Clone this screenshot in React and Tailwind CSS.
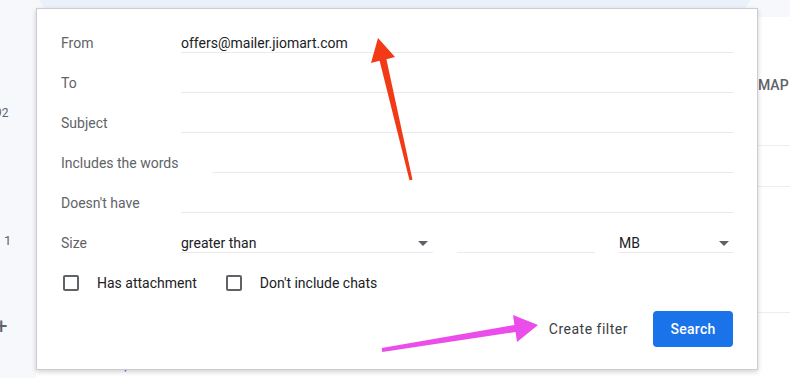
import React from "react";

// Text rows of the advanced search form
const fields = [
  { label: "From", value: "offers@mailer.jiomart.com" },
  { label: "To", value: "" },
  { label: "Subject", value: "" },
  { label: "Includes the words", value: "", wide: true },
  { label: "Doesn't have", value: "" },
];

function Caret() {
  return (
    <svg width="10" height="5" viewBox="0 0 10 5" className="shrink-0">
      <polygon points="0,0 10,0 5,5" fill="#5f6368" />
    </svg>
  );
}

function FieldRow({ label, value, wide }) {
  return (
    <div className="flex h-[40px] items-end">
      <div className="min-w-[120px] shrink-0 pb-[1px] text-[14px] leading-[18px] text-[#5f6368]">{label}</div>
      <div
        className={
          wide
            ? "ml-[31px] h-[19px] flex-1 border-b border-[#e8eaed] text-[14px] leading-[18px] text-[#202124]"
            : "h-[19px] flex-1 border-b border-[#e8eaed] text-[14px] leading-[18px] text-[#202124]"
        }
      >
        {value}
      </div>
    </div>
  );
}

function Checkbox({ label }) {
  return (
    <div className="flex items-center">
      <div className="h-[16px] w-[16px] rounded-[2px] border-2 border-[#5f6368]" />
      <span className="ml-[18px] text-[14px] text-[#202124]">{label}</span>
    </div>
  );
}

export default function App() {
  return (
    <div className="relative flex h-[378px] w-[790px] flex-col overflow-hidden bg-[#f6f8fc] font-['Roboto','Liberation_Sans',sans-serif]">
      {/* search bar peeking in at the top */}
      <div className="h-[17px] shrink-0">
        <div className="ml-[39px] mt-[-31px] h-[48px] w-[712px] rounded-full bg-[#eaf1fb]" />
      </div>

      <div className="flex flex-1">
        {/* sidebar fragments */}
        <div className="flex w-[36px] shrink-0 flex-col text-[#5f6368]">
          <div className="ml-[-5px] mt-[88px] text-[12px] leading-[16px]">92</div>
          <div className="ml-[4px] mt-[112px] text-[13px] leading-[16px]">1</div>
          <div className="ml-[-5px] mt-[66px] text-[22px] leading-[24px] text-[#5f6368]">+</div>
        </div>

        {/* mail list behind the dialog */}
        <div className="flex flex-1 flex-col bg-white">
          <div className="h-[129px] border-b border-[#eceff1] pt-[60px]">
            <div className="ml-[722px] text-[14px] font-medium leading-[16px] text-[#5f6368]">MAP</div>
          </div>
          <div className="h-[41px] border-b border-[#eceff1]" />
          <div className="h-[126px] border-b border-[#eceff1]" />
          <div className="ml-[27px] mt-[42px] text-[14px] leading-[20px] text-[#202124]">
            Select: <span className="text-[#1a73e8]">All, None</span>
          </div>
        </div>
      </div>

      {/* advanced search dialog */}
      <div className="absolute left-[36px] top-[8px] flex h-[362px] w-[722px] flex-col border border-[#cdcdcd] bg-white pl-[24px] pr-[24px] pt-[4px] shadow-[0_2px_5px_rgba(0,0,0,0.18)]">
        {fields.map((f) => (
          <FieldRow key={f.label} {...f} />
        ))}

        <div className="flex h-[40px] items-end">
          <div className="w-[120px] shrink-0 pb-[1px] text-[14px] leading-[18px] text-[#5f6368]">Size</div>
          <div className="flex h-[19px] w-[252px] items-center justify-between border-b border-[#e8eaed] pr-[5px] text-[14px] leading-[18px] text-[#202124]">
            <span>greater than</span>
            <Caret />
          </div>
          <div className="ml-[24px] h-[19px] w-[138px] border-b border-[#e8eaed]" />
          <div className="ml-[24px] flex h-[19px] flex-1 items-center justify-between border-b border-[#e8eaed] pr-[4px] text-[14px] leading-[18px] text-[#202124]">
            <span>MB</span>
            <Caret />
          </div>
        </div>

        <div className="mt-[10px] flex h-[40px] items-center pl-[2px]">
          <Checkbox label="Has attachment" />
          <div className="ml-[29px]">
            <Checkbox label="Don't include chats" />
          </div>
        </div>

        <div className="mt-[8px] flex h-[36px] items-center justify-end">
          <span className="mr-[25px] text-[14px] tracking-[0.5px] text-[#3c4043]">Create filter</span>
          <button className="h-[36px] w-[80px] rounded-[4px] bg-[#1a73e8] text-[14px] font-medium tracking-[0.3px] text-white">
            Search
          </button>
        </div>
      </div>

      {/* annotation arrows */}
      <svg className="pointer-events-none absolute left-0 top-0" width="790" height="378">
        <polygon
          points="409.5,180.3 412.5,179.7 386.4,59.2 395,57 378,38 371,63 379.6,60.8"
          fill="#f23a17"
        />
        <polygon
          points="381.7,348 514.4,325 513,315 538,325 517,342 515.6,332 382.3,352"
          fill="#ea4de9"
        />
      </svg>
    </div>
  );
}
